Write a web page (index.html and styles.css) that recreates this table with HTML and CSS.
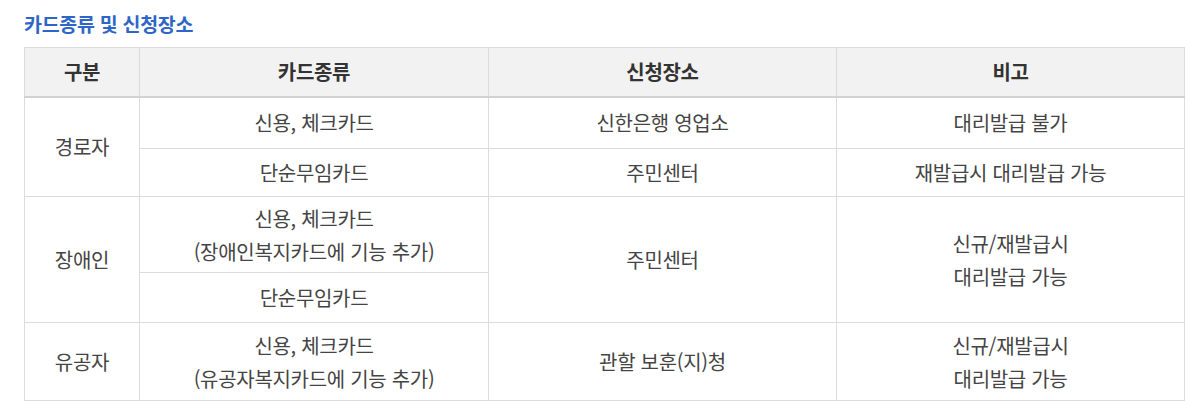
FILE: index.html
```html
<!DOCTYPE html>
<html lang="ko">
<head>
<meta charset="utf-8">
<title>카드종류 및 신청장소</title>
<link rel="stylesheet" href="styles.css">
</head>
<body>
<div class="page">
  <h2 class="title">카드종류 및 신청장소</h2>
  <table class="card-table">
    <colgroup>
      <col class="c1"><col class="c2"><col class="c3"><col class="c4">
    </colgroup>
    <thead>
      <tr class="r-head">
        <th>구분</th>
        <th>카드종류</th>
        <th>신청장소</th>
        <th>비고</th>
      </tr>
    </thead>
    <tbody>
      <tr class="r1">
        <td rowspan="2">경로자</td>
        <td>신용, 체크카드</td>
        <td>신한은행 영업소</td>
        <td>대리발급 불가</td>
      </tr>
      <tr class="r2">
        <td>단순무임카드</td>
        <td>주민센터</td>
        <td>재발급시 대리발급 가능</td>
      </tr>
      <tr class="r3">
        <td rowspan="2">장애인</td>
        <td>신용, 체크카드<br>(장애인복지카드에 기능 추가)</td>
        <td rowspan="2">주민센터</td>
        <td rowspan="2">신규/재발급시<br>대리발급 가능</td>
      </tr>
      <tr class="r4">
        <td>단순무임카드</td>
      </tr>
      <tr class="r5">
        <td>유공자</td>
        <td>신용, 체크카드<br>(유공자복지카드에 기능 추가)</td>
        <td>관할 보훈(지)청</td>
        <td>신규/재발급시<br>대리발급 가능</td>
      </tr>
    </tbody>
  </table>
</div>
</body>
</html>
```

FILE: styles.css
```css
html, body {
  margin: 0;
  padding: 0;
  background: #ffffff;
}

body {
  font-family: "Noto Sans CJK KR", "Noto Sans", sans-serif;
  color: #444444;
}

.page {
  padding: 10px 16px 0 24px;
}

.title {
  margin: 0 0 9px 0;
  font-size: 19.5px;
  line-height: 28px;
  font-weight: 700;
  color: #2e66c7;
  letter-spacing: -0.3px;
}

.card-table {
  width: 1160px;
  border-collapse: collapse;
  table-layout: fixed;
  font-size: 20px;
}

.c1 { width: 115px; }
.c2 { width: 349px; }
.c3 { width: 348px; }
.c4 { width: 348px; }

.card-table th,
.card-table td {
  border: 1px solid #dcdcdc;
  text-align: center;
  vertical-align: middle;
  padding: 0 6px;
  line-height: 33px;
  letter-spacing: -0.3px;
}

.card-table th {
  background: #f2f2f2;
  color: #333333;
  font-weight: 700;
  border-bottom: 2px solid #d2d2d2;
}

.card-table td {
  color: #444444;
  font-weight: 400;
}

.r-head { height: 49px; }
.r1 { height: 52px; }
.r2 { height: 48px; }
.r3 { height: 76px; }
.r4 { height: 50px; }
.r5 { height: 78px; }
```
